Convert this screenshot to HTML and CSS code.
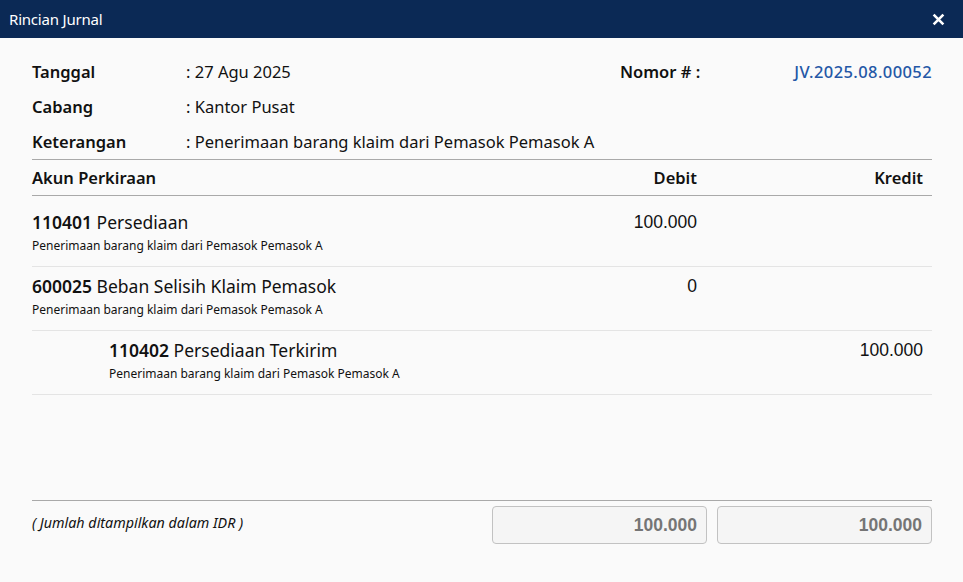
FILE: index.html
```html
<!DOCTYPE html>
<html lang="id">
<head>
<meta charset="UTF-8" />
<meta name="viewport" content="width=device-width, initial-scale=1" />
<title>Rincian Jurnal</title>
<link rel="stylesheet" href="styles.css">
</head>
<body>
  <div class="modal">
    <div class="modal-header">
      <span class="modal-title">Rincian Jurnal</span>
      <button class="close" aria-label="Tutup">
        <svg viewBox="0 0 12 12"><path d="M1.5 1.5 L10.5 10.5 M10.5 1.5 L1.5 10.5"/></svg>
      </button>
    </div>

    <div class="modal-body">
      <div class="info">
        <div class="info-left">
          <div class="info-label">Tanggal</div>
          <div class="info-value">: 27 Agu 2025</div>
          <div class="info-label">Cabang</div>
          <div class="info-value">: Kantor Pusat</div>
          <div class="info-label">Keterangan</div>
          <div class="info-value">: Penerimaan barang klaim dari Pemasok Pemasok A</div>
        </div>
        <div class="info-right">
          <span class="info-label">Nomor # :</span>
          <span class="doc-no">JV.2025.08.00052</span>
        </div>
      </div>

      <div class="table">
        <div class="row head">
          <div>Akun Perkiraan</div>
          <div class="num">Debit</div>
          <div class="num kredit">Kredit</div>
        </div>

        <div class="lines">
          <div class="row line">
            <div>
              <div class="acc"><b>110401</b> Persediaan</div>
              <div class="desc">Penerimaan barang klaim dari Pemasok Pemasok A</div>
            </div>
            <div class="num amount">100.000</div>
            <div class="num amount kredit"></div>
          </div>
          <div class="row line">
            <div>
              <div class="acc"><b>600025</b> Beban Selisih Klaim Pemasok</div>
              <div class="desc">Penerimaan barang klaim dari Pemasok Pemasok A</div>
            </div>
            <div class="num amount">0</div>
            <div class="num amount kredit"></div>
          </div>
          <div class="row line">
            <div class="indent">
              <div class="acc"><b>110402</b> Persediaan Terkirim</div>
              <div class="desc">Penerimaan barang klaim dari Pemasok Pemasok A</div>
            </div>
            <div class="num amount"></div>
            <div class="num amount kredit">100.000</div>
          </div>
        </div>
      </div>

      <div class="footer">
        <div class="note">( Jumlah ditampilkan dalam IDR )</div>
        <div class="total">100.000</div>
        <div class="total">100.000</div>
      </div>
    </div>
  </div>
</body>
</html>
```

FILE: styles.css
```css
body {
  margin: 0;
  background: #fafafa;
  font-family: "Noto Sans", "Open Sans", sans-serif;
  color: #111;
}

.modal {
  display: flex;
  flex-direction: column;
  height: 100vh;
}

.modal-header {
  height: 38px;
  background: #0b2955;
  color: #fff;
  display: flex;
  align-items: center;
  justify-content: space-between;
  padding: 0 18px 0 9px;
  flex-shrink: 0;
}

.modal-title {
  font-size: 15px;
  letter-spacing: -0.2px;
}

.close {
  background: none;
  border: 0;
  padding: 0;
  width: 13px;
  height: 13px;
  cursor: pointer;
  display: flex;
}

.close svg {
  width: 13px;
  height: 13px;
  stroke: #fff;
  stroke-width: 2.4;
  fill: none;
}

.modal-body {
  flex: 1;
  display: flex;
  flex-direction: column;
  padding: 16px 31px 38px 32px;
}

.info {
  display: flex;
  justify-content: space-between;
}

.info-left {
  display: grid;
  grid-template-columns: 154px auto;
  grid-auto-rows: 35px;
  align-items: center;
  font-size: 16.5px;
}

.info-label {
  font-weight: 600;
  font-size: 16.5px;
}

.info-right {
  width: 312px;
  height: 35px;
  display: flex;
  align-items: center;
  justify-content: space-between;
}

.doc-no {
  color: #2457a6;
  font-size: 16.5px;
  font-weight: 500;
  letter-spacing: 0.4px;
}

.table {
  flex: 1;
  display: flex;
  flex-direction: column;
}

.row {
  display: grid;
  grid-template-columns: 1fr 215px 215px;
  column-gap: 10px;
}

.row .num {
  text-align: right;
  padding-right: 10px;
}

.row .kredit {
  padding-right: 9px;
}

.head {
  height: 35px;
  align-items: center;
  border-top: 1px solid #a9a9a9;
  border-bottom: 1px solid #a9a9a9;
  font-weight: 600;
  font-size: 16.5px;
}

.lines {
  padding-top: 7px;
}

.line {
  padding: 7px 0 8px;
  border-bottom: 1px solid #e4e4e4;
}

.acc {
  font-size: 17.5px;
  line-height: 24px;
}

.acc b {
  font-weight: 600;
}

.desc {
  font-size: 12px;
  line-height: 24px;
}

.indent {
  padding-left: 77px;
}

.amount {
  font-family: "Liberation Sans", Arial, sans-serif;
  font-size: 17.5px;
  line-height: 24px;
}

.footer {
  display: grid;
  grid-template-columns: 1fr 215px 215px;
  column-gap: 10px;
  border-top: 1px solid #a9a9a9;
  padding-top: 5px;
}

.note {
  font-style: italic;
  font-size: 14.3px;
  align-self: center;
  margin-top: -6px;
}

.total {
  height: 36px;
  border: 1px solid #c2c2c2;
  border-radius: 4px;
  background: #f5f5f5;
  color: #757575;
  font-family: "Liberation Sans", Arial, sans-serif;
  font-weight: bold;
  font-size: 17.5px;
  display: flex;
  align-items: center;
  justify-content: flex-end;
  padding-right: 9px;
}
```
